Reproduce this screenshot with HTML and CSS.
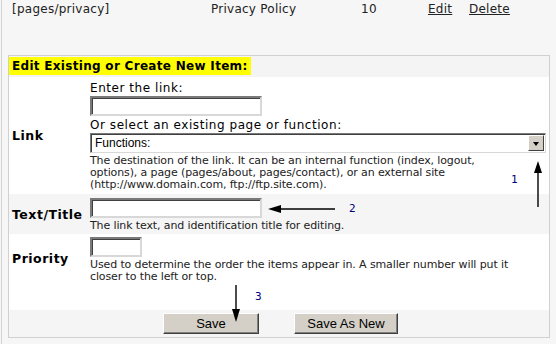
FILE: index.html
```html
<html lang="en">

<head>
    <meta charset="UTF-8">
    <title>Menu Items</title>
    <link rel="stylesheet" href="styles.css">
</head>

<body>
    <div class="page">
        <div class="item-row">
            <span>[pages/privacy]</span>
            <span>Privacy Policy</span>
            <span>10</span>
            <a href="#">Edit</a>
            <a href="#">Delete</a>
        </div>

        <form class="panel" action="/">
            <div class="panel-head">
                <span class="mark">Edit Existing or Create New Item:</span>
            </div>

            <div class="row">
                <label class="row-label" for="link">Link</label>
                <div class="field">
                    <div class="line">Enter the link:</div>
                    <input id="link" class="in" type="text">
                    <div class="line second">Or select an existing page or function:</div>
                    <div class="select">
                        <span>Functions:</span>
                        <span class="drop"></span>
                    </div>
                    <p class="hint wide">The destination of the link. It can be an internal function (index, logout, options), a page (pages/about, pages/contact), or an external site (http://www.domain.com, ftp://ftp.site.com).</p>
                </div>
            </div>

            <div class="row alt">
                <label class="row-label" for="title">Text/Title</label>
                <div class="field tight">
                    <input id="title" class="in" type="text">
                    <p class="hint">The link text, and identification title for editing.</p>
                </div>
            </div>

            <div class="row priority">
                <label class="row-label" for="priority">Priority</label>
                <div class="field short">
                    <input id="priority" class="in small" type="text">
                    <p class="hint">Used to determine the order the items appear in. A smaller number will put it closer to the left or top.</p>
                </div>
            </div>
            <div class="spacer"></div>

            <div class="buttons">
                <button type="submit" class="btn save">Save</button>
                <button type="submit" class="btn">Save As New</button>
            </div>
        </form>

        <svg class="notes" width="556" height="344" viewBox="0 0 556 344">
            <line x1="538" y1="171" x2="538" y2="207" stroke="#000" stroke-width="1.4" />
            <polygon points="538,161 534,173 542,173" fill="#000" />
            <text x="511" y="183">1</text>

            <line x1="280" y1="209" x2="335" y2="209" stroke="#000" stroke-width="1.4" />
            <polygon points="268,209 281,205 281,213" fill="#000" />
            <text x="349" y="212">2</text>

            <line x1="236" y1="285" x2="236" y2="310" stroke="#000" stroke-width="1.4" />
            <polygon points="236,322 232,309 240,309" fill="#000" />
            <text x="255" y="300">3</text>
        </svg>
    </div>
</body>

</html>
```

FILE: styles.css
```css
body {
    margin: 0;
    background: #f6f6f6;
    font-family: 'DejaVu Sans', Verdana, sans-serif;
    font-size: 12px;
    color: #000;
}

.page {
    position: relative;
    width: 556px;
    height: 344px;
    overflow: hidden;
    margin-left: 1px;
    border-left: 1px solid #d4d4d4;
    box-sizing: border-box;
}

.item-row {
    display: grid;
    grid-template-columns: 199px 150px 67px 41px auto;
    padding: 2px 0 0 10px;
    line-height: 14px;
    letter-spacing: 0.25px;
    color: #222;
}

.item-row a {
    color: #222;
}

.panel {
    margin: 39px 0 0 6px;
    width: 542px;
    border: 1px solid #d0d0d0;
    background: #fff;
    box-sizing: border-box;
}

.panel-head {
    background: #f4f4f4;
    height: 21px;
    padding-top: 1px;
    box-sizing: border-box;
}

.mark {
    display: inline-block;
    background: #ffff00;
    font-weight: bold;
    font-size: 12px;
    letter-spacing: 0.3px;
    line-height: 18px;
    padding: 0 3px 0 3px;
}

.row {
    display: grid;
    grid-template-columns: 81px 1fr;
    align-items: center;
}

.row.alt {
    background: #f5f5f5;
}

.row-label {
    font-weight: bold;
    font-size: 12.5px;
    letter-spacing: 0.5px;
    padding-left: 3px;
}

.field {
    padding: 4px 0 3px 0;
}

.field.tight {
    padding: 4px 0 2px 0;
}

.field.short {
    padding: 3px 0 0 0;
}

.line {
    line-height: 15px;
    letter-spacing: 0.55px;
}

.line.second {
    margin-top: 2px;
}

.in {
    display: block;
    width: 172px;
    height: 20px;
    margin: 0;
    border: 2px solid;
    border-color: #7a7a7a #d8d8d8 #d8d8d8 #7a7a7a;
    box-shadow: inset 1px 1px 0 #404040;
    box-sizing: border-box;
    background: #fff;
}

.in.small {
    width: 52px;
}

.select {
    display: flex;
    align-items: center;
    justify-content: space-between;
    width: 456px;
    height: 20px;
    border: 1px solid #7a7a7a;
    border-right-color: #d8d8d8;
    border-bottom-color: #d8d8d8;
    box-shadow: inset 1px 1px 0 #404040;
    box-sizing: border-box;
    padding: 1px 1px 1px 4px;
    font-family: 'Liberation Sans', Arial, sans-serif;
    font-size: 12px;
}

.drop {
    position: relative;
    width: 16px;
    height: 16px;
    background: #d4d0c8;
    border: 1px solid;
    border-color: #fff #404040 #404040 #fff;
    box-sizing: border-box;
}

.drop::after {
    content: '';
    position: absolute;
    left: 4px;
    top: 6px;
    border-left: 3.5px solid transparent;
    border-right: 3.5px solid transparent;
    border-top: 4px solid #000;
}

.hint {
    margin: 2px 0 0 0;
    font-size: 11px;
    letter-spacing: -0.12px;
    line-height: 12px;
    color: #222;
    max-width: 445px;
}

.hint.wide {
    max-width: 420px;
}

.spacer {
    height: 27px;
}

.buttons {
    display: flex;
    background: #f5f5f5;
    padding: 3px 0 3px 154px;
    gap: 35px;
}

.btn {
    height: 21px;
    width: 96px;
    padding: 0;
    background: #d4d0c8;
    border: 1px solid;
    border-color: #fff #404040 #404040 #fff;
    box-shadow: inset -1px -1px 0 #808080;
    font-family: 'Liberation Sans', Arial, sans-serif;
    font-size: 13px;
    color: #000;
}

.btn + .btn {
    width: 104px;
}

.notes {
    position: absolute;
    left: -2px;
    top: 0;
}

.notes text {
    font-family: 'DejaVu Sans Mono', monospace;
    font-size: 11px;
    fill: #000080;
}
```
